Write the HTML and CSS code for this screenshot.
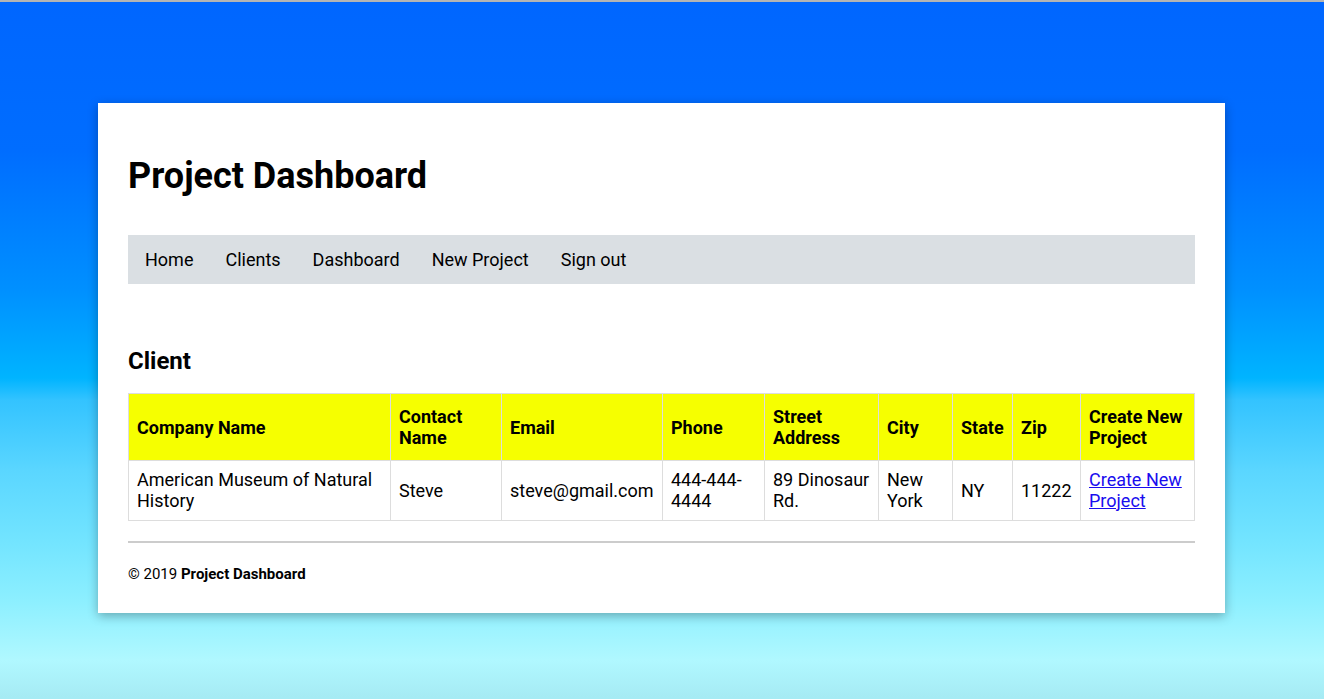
FILE: index.html
```html
<!DOCTYPE html>
<html lang="en">
<head>
<meta charset="utf-8">
<title>Project Dashboard</title>
<link rel="stylesheet" href="styles.css">
</head>
<body>
<div class="card">
  <h1 class="title">Project Dashboard</h1>
  <nav class="nav">
    <a href="#">Home</a>
    <a href="#">Clients</a>
    <a href="#">Dashboard</a>
    <a href="#">New Project</a>
    <a href="#">Sign out</a>
  </nav>
  <h3 class="section">Client</h3>
  <table class="clients">
    <colgroup>
      <col class="c1"><col class="c2"><col class="c3"><col class="c4"><col class="c5"><col class="c6"><col class="c7"><col class="c8"><col class="c9">
    </colgroup>
    <thead>
      <tr>
        <th>Company Name</th>
        <th>Contact Name</th>
        <th>Email</th>
        <th>Phone</th>
        <th>Street Address</th>
        <th>City</th>
        <th>State</th>
        <th>Zip</th>
        <th>Create New Project</th>
      </tr>
    </thead>
    <tbody>
      <tr>
        <td>American Museum of Natural History</td>
        <td>Steve</td>
        <td>steve@gmail.com</td>
        <td>444-444-4444</td>
        <td>89 Dinosaur Rd.</td>
        <td>New York</td>
        <td>NY</td>
        <td>11222</td>
        <td><a class="link" href="#">Create New Project</a></td>
      </tr>
    </tbody>
  </table>
  <hr class="rule">
  <footer class="footer">© 2019 <strong>Project Dashboard</strong></footer>
</div>
</body>
</html>
```

FILE: styles.css
```css
html, body {
  margin: 0;
  padding: 0;
}
body {
  min-height: 697px;
  border-top: 2px solid #b4b4b4;
  font-family: Roboto, "Liberation Sans", sans-serif;
  color: #000;
  background: linear-gradient(to bottom,
    #0066ff 0px,
    #006dff 150px,
    #0090ff 290px,
    #00b4ff 378px,
    #33c3ff 400px,
    #5ad6ff 470px,
    #72e4ff 540px,
    #8cefff 600px,
    #b0f8ff 660px,
    #a6ebf4 697px);
  overflow: hidden;
}
.card {
  width: 1067px;
  margin: 101px 0 0 98px;
  padding: 30px;
  background: #fff;
  box-shadow: 0 3px 10px rgba(0, 0, 0, 0.3);
}
.title {
  margin: 22px 0 38px;
  font-size: 36px;
  font-weight: 700;
  line-height: 42px;
}
.nav {
  display: flex;
  background: #dadfe3;
  padding: 0 0.5px;
}
.nav a {
  padding: 14px 16px;
  font-size: 18px;
  line-height: 21px;
  color: #000;
  text-decoration: none;
}
.nav a:first-child {
  padding-left: 16.5px;
}
.section {
  margin: 63px 0 18px;
  font-size: 24px;
  line-height: 28px;
  font-weight: 700;
}
.clients {
  width: 1066px;
  border-collapse: collapse;
  table-layout: fixed;
  font-size: 18px;
  line-height: 21px;
}
.c1 { width: 262px; }
.c2 { width: 111px; }
.c3 { width: 161px; }
.c4 { width: 102px; }
.c5 { width: 114px; }
.c6 { width: 74px; }
.c7 { width: 60px; }
.c8 { width: 68px; }
.c9 { width: 114px; }
.clients th,
.clients td {
  border: 1px solid #dddddd;
  text-align: left;
  vertical-align: middle;
}
.clients th {
  background: #f6ff00;
  font-weight: 700;
  padding: 12px 8px;
}
.clients td {
  padding: 8px 8px 8.5px;
}
.link {
  color: #1a0dee;
}
.rule {
  margin: 20px 0 22px;
  border: 0;
  border-top: 2px solid #cccccc;
  width: 1067px;
}
.footer {
  font-size: 15px;
  line-height: 18px;
}
.footer strong {
  font-weight: 700;
}
```
